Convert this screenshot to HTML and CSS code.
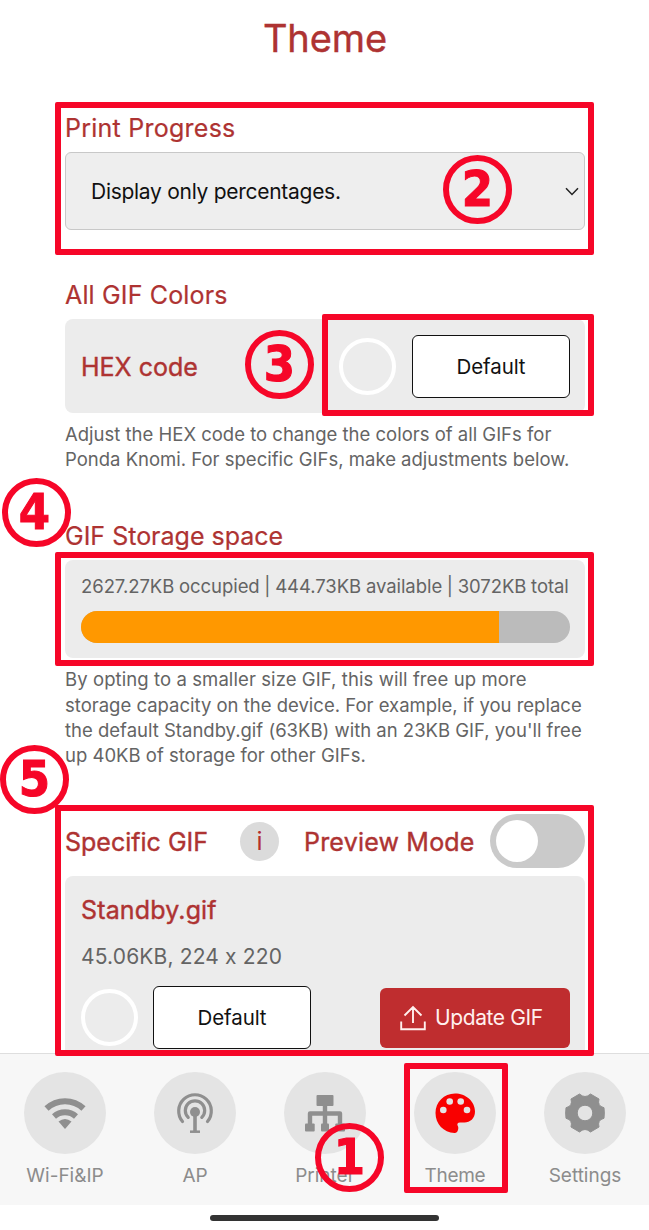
FILE: index.html
```html
<!DOCTYPE html>
<html lang="en">
<head>
<meta charset="utf-8">
<title>Theme</title>
<link rel="stylesheet" href="styles.css">
</head>
<body>
<div class="screen">
  <main class="content">
    <h1 class="title"><span>Theme</span></h1>

    <section class="progress">
      <h2 class="heading"><span class="t-progress">Print Progress</span></h2>
      <div class="select">
        <span class="t-select">Display only percentages.</span>
        <svg class="chevron" viewBox="0 0 14 9"><path d="M1 1.2 7 7.4 13 1.2"/></svg>
      </div>
    </section>

    <section class="colors">
      <h2 class="heading"><span class="t-colors">All GIF Colors</span></h2>
      <div class="card hex">
        <span class="label t-hex">HEX code</span>
        <span class="swatch"></span>
        <button class="default"><span>Default</span></button>
      </div>
      <p class="note"><span class="n1">Adjust the HEX code to change the colors of all GIFs for</span><br><span class="n2">Ponda Knomi. For specific GIFs, make adjustments below.</span></p>
    </section>

    <section class="storage">
      <h2 class="heading"><span class="t-storage">GIF Storage space</span></h2>
      <div class="card usage">
        <div class="figures"><span>2627.27KB occupied | 444.73KB available | 3072KB total</span></div>
        <div class="meter"><div class="fill" style="width:85.5%"></div></div>
      </div>
      <p class="note"><span class="n3">By opting to a smaller size GIF, this will free up more</span><br><span class="n4">storage capacity on the device. For example, if you replace</span><br><span class="n5">the default Standby.gif (63KB) with an 23KB GIF, you'll free</span><br><span class="n6">up 40KB of storage for other GIFs.</span></p>
    </section>

    <section class="specific">
      <div class="modes">
        <span class="label t-specific">Specific GIF</span>
        <span class="info">i</span>
        <span class="label t-preview">Preview Mode</span>
        <span class="toggle"><span class="knob"></span></span>
      </div>
      <div class="card gif">
        <div class="label name"><span class="t-name">Standby.gif</span></div>
        <div class="meta"><span>45.06KB, 224 x 220</span></div>
        <div class="actions">
          <span class="swatch"></span>
          <button class="default"><span>Default</span></button>
          <button class="update">
            <svg class="upload" viewBox="0 0 26 26"><path d="M13 18V2M4.500 10.500 13 2l8.500 8.500M1.200 16.500V24.300H24.800V16.500"/></svg>
            <span>Update GIF</span>
          </button>
        </div>
      </div>
    </section>
  </main>

  <nav class="tabs">
    <div class="tab"><span class="disc"><svg viewBox="0 0 82 82" fill="none" stroke="#8f8f8f">
      <path stroke-width="6" d="M22.500 36.500A27 27 0 0 1 59.500 36.500M30 44.500A16.500 16.500 0 0 1 52 44.500"/>
      <path fill="#8f8f8f" stroke="none" d="M34.500 49.500Q41 44.500 47.500 49.500L41 57Z"/></svg></span><span class="tab-label w-wifi">Wi-Fi&amp;IP</span></div>
    <div class="tab"><span class="disc"><svg viewBox="0 0 82 82" fill="none" stroke="#8f8f8f">
      <circle cx="41" cy="40" r="5" fill="#8f8f8f" stroke="none"/>
      <path stroke-width="3.200" stroke-linecap="round" d="M28.500 49.500A16.300 16.300 0 1 1 53.500 49.500M34.200 45.400A9.700 9.700 0 1 1 47.800 45.400"/>
      <path stroke-width="3.600" d="M41 40V59"/><path stroke-width="2.500" d="M36 59.700H46"/></svg></span><span class="tab-label w-ap">AP</span></div>
    <div class="tab"><span class="disc"><svg viewBox="0 0 82 82" fill="none" stroke="#8f8f8f">
      <rect x="32.500" y="23" width="17" height="11" rx="1" fill="#8f8f8f" stroke="none"/>
      <path stroke-width="4.400" stroke-linejoin="round" d="M41 33V53M26 53V41.500H56V53"/>
      <g fill="#8f8f8f" stroke="none"><rect x="21" y="51.500" width="9.700" height="8" rx="1"/><rect x="37" y="51.500" width="8" height="8" rx="1"/><rect x="51.300" y="51.500" width="9.700" height="8" rx="1"/></g></svg></span><span class="tab-label w-printer">Printer</span></div>
    <div class="tab"><span class="disc"><svg viewBox="0 0 82 82">
      <path fill="#f90000" d="M41 21.500C51.500 21.500 61 29 61 39.500C61 46.500 56 50.500 50.500 50.500H46C43.500 50.500 43 52 43.600 53.500C44.600 55 44.500 57 43.800 58.500C43.300 60.300 42.300 61 40.500 60.900C29.500 60.500 21.500 52 21.500 41C21.500 30 30 21.500 41 21.500Z"/>
      <g fill="#e4e4e4"><circle cx="29.300" cy="38" r="3.300"/><circle cx="35.700" cy="29.500" r="3.300"/><circle cx="46.700" cy="29.500" r="3.300"/><circle cx="53" cy="38" r="3.300"/></g></svg></span><span class="tab-label w-theme">Theme</span></div>
    <div class="tab"><span class="disc"><svg viewBox="0 0 82 82">
      <path fill="#8f8f8f" stroke="#8f8f8f" stroke-width="1" stroke-linejoin="round" fill-rule="evenodd" d="M60 46.300Q53 48 55 55L46.500 60Q41 55 35.500 60L27 55Q29 48 22 46.300Q21.300 41 22 35.700Q29 34 27 27L35.500 22Q41 27 46.500 22L55 27Q53 34 60 35.700Q60.700 41 60 46.300ZM41 33.200A7.800 7.800 0 1 0 41 48.800A7.800 7.800 0 1 0 41 33.200Z"/></svg></span><span class="tab-label w-settings">Settings</span></div>
  </nav>
  <div class="gesture"><span class="pill"></span></div>

  <div class="frame f-progress"></div>
  <div class="frame f-hex"></div>
  <div class="frame f-storage"></div>
  <div class="frame f-specific"></div>
  <div class="frame f-tab"></div>
  <div class="step s1">1</div>
  <div class="step s2">2</div>
  <div class="step s3">3</div>
  <div class="step s4">4</div>
  <div class="step s5">5</div>
</div>
</body>
</html>
```
FILE: styles.css
```css
* { box-sizing: border-box; }
body { margin: 0; background: #fff; font-family: Inter, "Liberation Sans", sans-serif; font-feature-settings: "calt" 0; }
h1, h2, p { margin: 0; font-weight: 400; }
button { font: inherit; padding: 0; margin: 0; }
.screen { position: relative; width: 649px; height: 1230px; overflow: hidden; }
.content { height: 1053px; overflow: hidden; padding: 0 64px 0 65px; white-space: nowrap; }

.title { height: 104px; padding-top: 14px; line-height: 48px; font-size: 38px; font-weight: 400; letter-spacing: -0.1px; -webkit-text-stroke: 0.4px #ae3332; color: #ae3332; text-align: center; }
.heading { height: 48px; line-height: 48px; font-size: 25px; color: #ae3332; -webkit-text-stroke: 0.2px #ae3332; }
.label { font-size: 25px; color: #ae3332; -webkit-text-stroke: 0.4px #ae3332; }
.t-progress { letter-spacing: 0.25px; }
.t-colors { letter-spacing: 0.15px; }
.t-hex { padding-top: 2px; }

.select { height: 78px; border: 1px solid #c8c8c8; border-radius: 6px; background: #eee; display: flex; align-items: center; justify-content: space-between; padding: 0 5px 0 25px; font-size: 21px; letter-spacing: -0.28px; color: #111; }
.chevron { width: 14px; height: 9px; fill: none; stroke: #222; stroke-width: 1.5; }

.colors { padding-top: 41px; }
.card { background: #ececec; border-radius: 8px; }
.hex { height: 94px; display: flex; align-items: center; padding: 0 15px 0 16px; }
.hex .swatch { margin-left: auto; }
.swatch { width: 57px; height: 57px; border: 4px solid #fff; border-radius: 50%; flex: none; }
.default { width: 158px; height: 63px; margin-left: 16px; border: 1.5px solid #111; border-radius: 6px; background: #fff; font-size: 20.500px; letter-spacing: -0.1px; color: #111; }
.note { font-size: 18.500px; line-height: 25.200px; color: #646464; }
.n3 { letter-spacing: 0.09px; }
.colors .note { padding-top: 9px; }

.storage { padding-top: 40px; }
.usage { height: 98px; padding: 0 15px 0 16px; }
.figures { height: 51px; line-height: 52px; font-size: 18.500px; letter-spacing: -0.06px; word-spacing: -0.4px; color: #646464; }
.meter { height: 32px; border-radius: 16px; background: #bbb; overflow: hidden; }
.fill { height: 100%; background: #ff9800; }
.storage .note { padding-top: 9px; }

.specific { padding-top: 46px; }
.modes { height: 54px; display: flex; align-items: center; }
.info { width: 39px; height: 39px; border-radius: 50%; background: #dbdbdb; color: #b52f2d; font-size: 25px; line-height: 39px; text-align: center; }
.toggle { width: 95px; height: 54px; border-radius: 27px; background: #cacaca; display: flex; align-items: center; padding-left: 6px; margin-left: auto; }
.knob { width: 42px; height: 42px; border-radius: 50%; background: #fff; }
.t-specific { width: 175px; padding-top: 2px; }
.t-preview { margin-left: 25px; padding-top: 2px; letter-spacing: 0.2px; }
.gif { height: 210px; margin-top: 8px; padding: 0 15px 0 16px; }
.name { height: 57px; padding-top: 10px; line-height: 48px; letter-spacing: 0.15px; }
.meta { height: 53px; line-height: 47px; font-size: 21px; letter-spacing: 0.15px; color: #646464; }
.actions { display: flex; align-items: center; }
.actions .default { margin-left: 15px; }
.update { width: 190px; height: 60px; margin-left: auto; border: 0; border-radius: 6px; background: #bf2d2f; color: #fff0ee; font-size: 21px; letter-spacing: -0.4px; display: flex; align-items: center; padding-left: 20px; gap: 9px; }
.upload { width: 26px; height: 26px; fill: none; stroke: #fff0ee; stroke-width: 1.900; }

.tabs { height: 152px; border-top: 1px solid #dedede; background: #f7f7f7; display: grid; grid-template-columns: repeat(5, 130px); padding-top: 18px; }
.tab { display: flex; flex-direction: column; align-items: center; }
.disc { width: 82px; height: 82px; border-radius: 50%; background: #e4e4e4; }
.disc svg { display: block; width: 82px; height: 82px; }
.tab-label { margin-top: 9px; line-height: 26px; font-size: 19px; color: #8c8c8c; }
.w-theme { letter-spacing: -0.3px; }
.gesture { height: 25px; display: flex; padding: 10px 0 0 210px; }
.pill { width: 229px; height: 6px; border-radius: 3px; background: #333; }

.frame { position: absolute; border: 6px solid #f60628; border-radius: 2px; }
.f-progress { left: 55px; top: 102px; width: 539px; height: 153px; }
.f-hex { left: 322px; top: 314px; width: 272px; height: 102px; }
.f-storage { left: 55px; top: 552px; width: 539px; height: 114px; }
.f-specific { left: 55px; top: 805px; width: 539px; height: 251px; }
.f-tab { left: 404px; top: 1063px; width: 104px; height: 130px; }
.step { position: absolute; width: 69px; height: 69px; border: 6px solid #f60628; border-radius: 50%; color: #f60628; font: bold 50px/57px "DejaVu Sans Condensed", "DejaVu Sans", sans-serif; -webkit-text-stroke: 1px #f60628; text-align: center; }
.s1 { left: 315px; top: 1123px; }
.s2 { left: 443px; top: 155px; }
.s3 { left: 245px; top: 330px; }
.s4 { left: 2px; top: 478px; padding-right: 4px; }
.s5 { left: 0; top: 745px; }
```
